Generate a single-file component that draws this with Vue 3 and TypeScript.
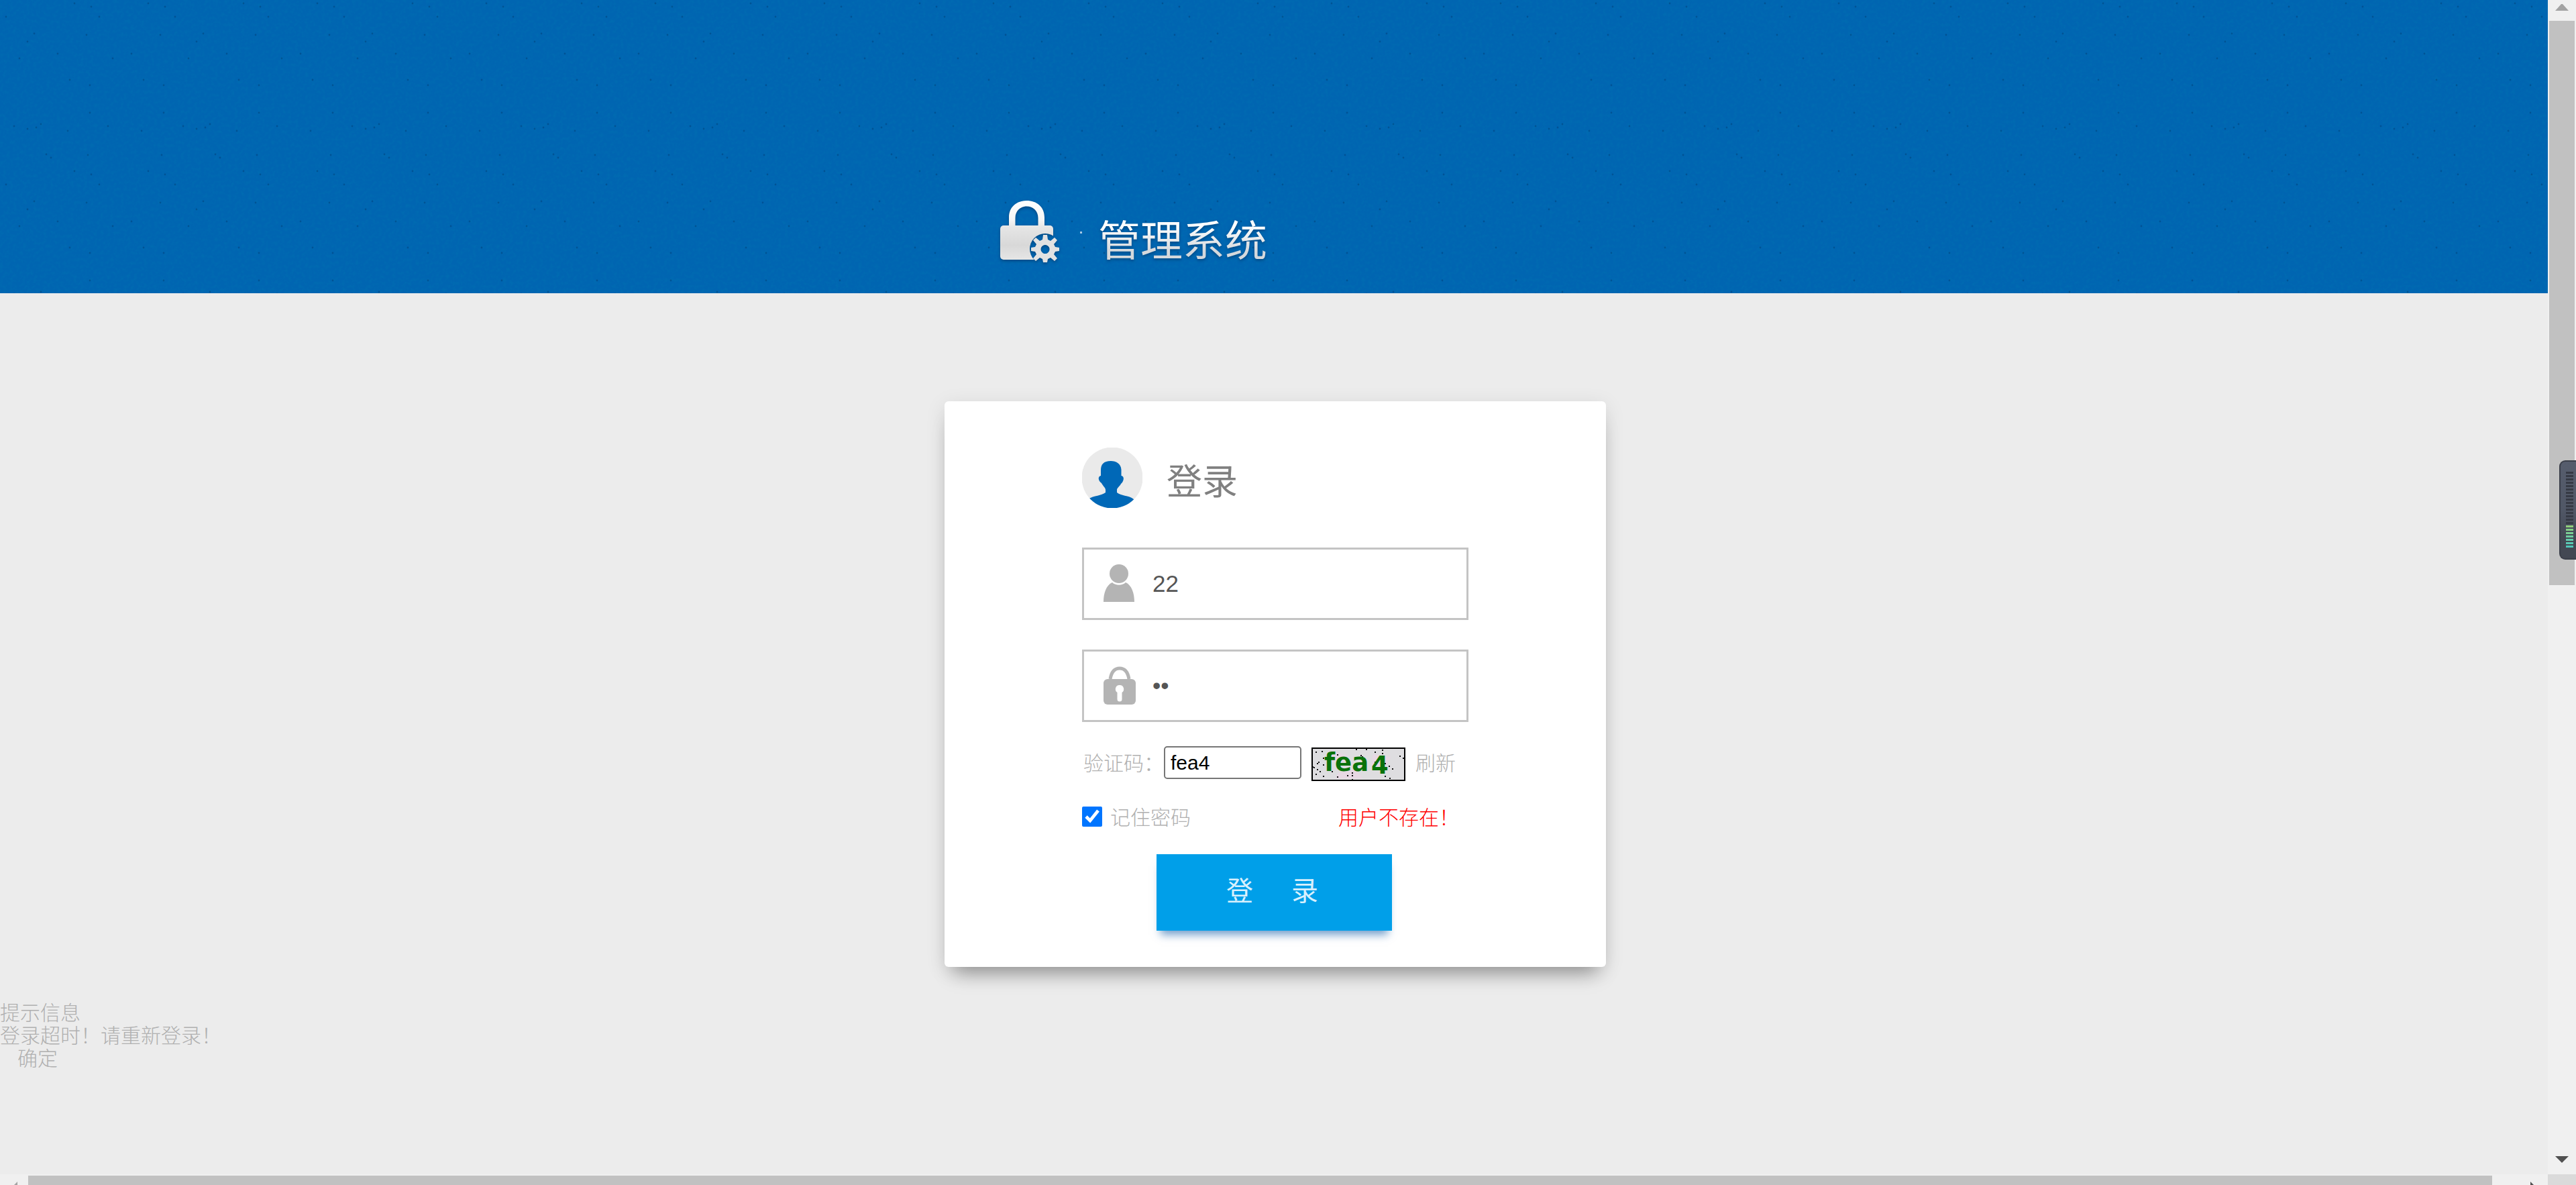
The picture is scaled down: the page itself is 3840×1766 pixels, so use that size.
<script setup lang="ts">
import { ref } from 'vue'

const username = ref('22')
const password = ref('22')
const captcha = ref('fea4')
const remember = ref(true)
const error = ref('用户不存在！')

// Speckles of one 252 x 250 header texture tile
const speckles: [number, number][] = [
  [111, 5], [221, 5], [136, 10], [246, 10], [9, 25], [148, 25], [51, 50], [41, 62],
  [129, 52], [239, 52], [86, 80], [196, 80], [29, 87], [168, 87], [104, 119], [214, 119],
  [134, 127], [244, 127], [134, 168], [244, 168], [41, 192], [21, 188], [161, 188],
  [54, 190], [61, 185], [101, 195], [211, 195], [69, 230], [76, 235], [131, 231], [241, 231],
]

// Noise dots of the captcha picture
const noise: [number, number][] = [
  [7, 7], [16, 6], [67, 3], [82, 3], [95, 7], [106, 4], [106, 9], [132, 13], [137, 16],
  [39, 11], [74, 12], [76, 14], [65, 16], [2, 29], [11, 22], [9, 24], [18, 26], [4, 30],
  [9, 33], [13, 36], [7, 40], [18, 43], [39, 44], [54, 42], [61, 38], [61, 42], [61, 48],
  [110, 43], [117, 46], [121, 32], [116, 28], [110, 24], [18, 16], [31, 36], [95, 22],
]

const meter = Array.from({ length: 23 }, (_, i) => i)
const greens = ['#8fd07c', '#84d088', '#79cf94', '#6ecea0', '#63ccab', '#59cab3', '#50c7b8']
const meterColor = (i: number) => (i < 16 ? '#363a45' : greens[i - 16])
</script>

<template>
  <div class="window">
    <div class="page">
      <header class="header">
        <svg class="texture" aria-hidden="true">
          <defs>
            <pattern id="grain" width="252" height="250" patternUnits="userSpaceOnUse">
              <circle v-for="([x, y], i) in speckles" :key="i" :cx="x" :cy="y" r="1.4" fill="#003f78" opacity="0.5" />
            </pattern>
            <filter id="noise" x="0" y="0" width="100%" height="100%">
              <feTurbulence type="fractalNoise" baseFrequency="0.2" numOctaves="2" />
              <feColorMatrix values="0 0 0 0 0  0 0 0 0 0.25  0 0 0 0 0.45  0.7 0 0 0 -0.27" />
            </filter>
          </defs>
          <rect width="100%" height="100%" filter="url(#noise)" opacity="0.5" />
          <rect width="100%" height="100%" fill="url(#grain)" />
        </svg>
        <div class="wrap brand">
          <svg class="brand-icon" viewBox="0 0 90 96" aria-hidden="true">
            <defs>
              <linearGradient id="metal" x1="0" y1="0" x2="0" y2="96" gradientUnits="userSpaceOnUse">
                <stop offset="0" stop-color="#ffffff" />
                <stop offset="0.3" stop-color="#f6f6f6" />
                <stop offset="0.42" stop-color="#e6e6e6" />
                <stop offset="0.7" stop-color="#d8d8d8" />
                <stop offset="1" stop-color="#eaeaea" />
              </linearGradient>
              <mask id="bite">
                <rect width="90" height="96" fill="#fff" />
                <circle cx="68" cy="73" r="23" fill="#000" />
              </mask>
            </defs>
            <g mask="url(#bite)" fill="url(#metal)">
              <path d="M14 42V26C14 10 26 1 40.500 1S67 10 67 26V42H57.500V27C57.500 16 50 9.500 40.500 9.500S23.500 16 23.500 27V42Z" />
              <rect x="1" y="38" width="79" height="51" rx="5" />
            </g>
            <path
              transform="translate(1 1)"
              fill="#e2e2e2"
              fill-rule="evenodd"
              d="M64 51h6l1 7 4 2 6-5 4 4-5 6 2 4 6 1v5l-6 1-2 4 5 6-4 4-6-5-4 2-1 5h-6l-1-5-4-2-6 5-4-4 5-6-2-4-6-1v-5l6-1 2-4-5-6 4-4 6 5 4-2ZM67 66a6.500 6.500 0 1 0 0.100 0Z"
            />
          </svg>
          <span class="brand-dot"></span>
          <h1 class="brand-name">管理系统</h1>
        </div>
      </header>

      <main class="wrap">
        <form class="card" @submit.prevent>
          <div class="title">
            <svg class="avatar" viewBox="0 0 90 90" aria-hidden="true">
              <defs><clipPath id="disc"><circle cx="45" cy="45" r="45.500" /></clipPath></defs>
              <g clip-path="url(#disc)">
                <rect width="90" height="90" fill="#eaeaea" />
                <path
                  fill="#0068b7"
                  d="M43 20C51 20 58 24 58.500 33V42C64 43 62 51 58 54C56 58 52 60 52 63V67C57 72 70 71 77 77L90 95H0L9 77C18 71 29 72 35 67V63C35 60 31 57 29 53C24 50 23 43 28 42V34C28 25 32 20 43 20Z"
                />
              </g>
            </svg>
            <h2>登录</h2>
          </div>

          <label class="field">
            <svg class="field-icon" viewBox="0 0 48 58" aria-hidden="true" fill="#b4b4b4">
              <circle cx="23" cy="14" r="14" />
              <path d="M0 56C0 43 4 31 13 27C18 32 28 32 33 27C42 31 46 43 46 56Z" />
            </svg>
            <input v-model="username" type="text" aria-label="用户名" />
          </label>

          <label class="field">
            <svg class="field-icon" viewBox="0 0 48 58" aria-hidden="true">
              <path d="M10 19C12 7 17 3 24 3S36 7 38 19" fill="none" stroke="#b4b4b4" stroke-width="5" />
              <rect y="19" width="48" height="38" rx="6" fill="#b4b4b4" />
              <path d="M24 28a6 6 0 0 1 3.500 11V49a3.500 3.500 0 0 1-7 0V39A6 6 0 0 1 24 28Z" fill="#fff" />
            </svg>
            <input v-model="password" type="password" aria-label="密码" />
          </label>

          <div class="captcha">
            <label for="code">验证码：</label>
            <input id="code" v-model="captcha" type="text" />
            <svg class="captcha-image" viewBox="0 0 140 50">
              <rect x="1" y="1" width="138" height="48" fill="#dedde0" stroke="#000" stroke-width="2" />
              <path d="M30 4l24 8-12 12-18-6ZM92 10l26 4-10 22-20-10ZM40 38l26-6 10 14H36Z" fill="#f0d4e8" opacity="0.5" />
              <rect v-for="([x, y], i) in noise" :key="i" :x="x - 1" :y="y - 1" width="2" height="2" fill="#111" />
              <text x="19" y="35">fea</text>
              <text x="89" y="39">4</text>
            </svg>
            <a href="#">刷新</a>
          </div>

          <div class="options">
            <label class="remember"><input v-model="remember" type="checkbox" /><span>记住密码</span></label>
            <span class="error">{{ error }}</span>
          </div>

          <button class="submit" type="submit"><span>登</span><span>录</span></button>
        </form>
      </main>

      <section class="notice">
        <div>提示信息</div>
        <div>登录超时！请重新登录！</div>
        <a href="#">确定</a>
      </section>
    </div>

    <div class="vbar">
      <svg class="arrow-up" viewBox="0 0 42 31" aria-hidden="true"><path d="M11 16L20 6h2L31 16Z" fill="#a3a3a3" /></svg>
      <div class="vtrack">
        <div class="vthumb"></div>
      </div>
      <svg class="arrow-down" viewBox="0 0 42 31" aria-hidden="true"><path d="M11 4H31L21 14Z" fill="#505050" /></svg>
    </div>
    <div class="hbar">
      <svg class="arrow-side" viewBox="0 0 42 16" aria-hidden="true"><path d="M26 11V16H21Z" fill="#a3a3a3" /></svg>
      <div class="hthumb"></div>
      <svg class="arrow-end" viewBox="0 0 83 16" aria-hidden="true"><path d="M57 11V16H62Z" fill="#505050" /></svg>
    </div>
    <div class="corner"></div>

    <div class="meter">
      <i v-for="i in meter" :key="i" :style="{ background: meterColor(i) }"></i>
    </div>
  </div>
</template>

<style>
body {
  margin: 0;
  background: #ececec;
}
</style>

<style scoped>
.window {
  position: relative;
  display: grid;
  grid-template-columns: 1fr 42px;
  grid-template-rows: 1fr 16px;
  min-height: 100vh;
  background: #ececec;
  color: #b0b0b0;
  font: 300 30px/34px "Liberation Sans", "Noto Sans CJK SC", sans-serif;
}
a {
  color: inherit;
  text-decoration: none;
}
h1,
h2 {
  margin: 0;
  font-weight: 400;
}
.wrap {
  box-sizing: border-box;
  width: 990px;
  margin: 0 auto;
  padding-left: 4px;
}

.header {
  position: relative;
  display: flex;
  align-items: flex-end;
  height: 437px;
  background: #0065b1;
}
.texture {
  position: absolute;
  inset: 0;
  width: 100%;
  height: 100%;
}
.brand {
  position: relative;
  display: flex;
  align-items: center;
  padding: 0 0 42px 86px;
}
.brand-icon {
  width: 90px;
  height: 96px;
  filter: drop-shadow(0 2px 2px rgba(0, 40, 80, 0.5));
}
.brand-dot {
  width: 3px;
  height: 3px;
  margin: 0 24px 0 30px;
  background: #a8c8e4;
}
.brand-name {
  font-size: 63px;
  line-height: 72px;
  padding-top: 26px;
  background: linear-gradient(#fff 40%, #d4d8dc 80%);
  background-clip: text;
  color: transparent;
  filter: drop-shadow(0 2px 2px rgba(0, 40, 80, 0.5));
}

.card {
  box-sizing: border-box;
  margin-top: 161px;
  padding: 69px 205px 54px;
  border-radius: 6px;
  background: #fff;
  box-shadow: 0 22px 28px -14px rgba(0, 0, 0, 0.36), 0 6px 30px rgba(0, 0, 0, 0.1);
}
.title {
  display: flex;
  align-items: center;
  gap: 36px;
  margin-bottom: 59px;
}
.avatar {
  width: 90px;
  height: 90px;
}
.title h2 {
  padding-top: 14px;
  font-size: 53px;
  line-height: 60px;
  color: #808080;
}

.field {
  box-sizing: border-box;
  display: flex;
  align-items: center;
  gap: 25px;
  height: 108px;
  margin-bottom: 44px;
  padding-left: 29px;
  border: 3px solid #c4c4c4;
}
.field-icon {
  width: 48px;
  height: 58px;
}
.field input {
  flex: 1;
  min-width: 0;
  padding: 0;
  border: 0;
  outline: 0;
  background: none;
  color: #555;
  font: 35px/42px "Liberation Sans", sans-serif;
}

.captcha {
  display: flex;
  align-items: center;
  height: 52px;
  margin: -8px 0 35px;
  padding-left: 2px;
}
.captcha label {
  width: 120px;
}
.captcha input {
  box-sizing: border-box;
  width: 205px;
  height: 49px;
  margin-bottom: 3px;
  padding: 0 8px;
  border: 2px solid #767676;
  border-radius: 5px;
  background: #fff;
  color: #000;
  font: 30px/34px "Liberation Sans", sans-serif;
}
.captcha-image {
  width: 140px;
  height: 50px;
  margin: 2px 15px 0;
}
.captcha-image text {
  fill: #0a720a;
  font: bold 37px "DejaVu Sans", sans-serif;
}

.options {
  display: flex;
  align-items: center;
  justify-content: space-between;
  height: 36px;
  margin-bottom: 38px;
  padding-right: 14px;
}
.remember {
  display: flex;
  align-items: center;
  gap: 12px;
}
.remember input {
  width: 30px;
  height: 30px;
  margin: 0;
  accent-color: #0075ff;
}
.remember span,
.error {
  padding-top: 4px;
}
.error {
  color: #f00;
}

.submit {
  display: flex;
  justify-content: center;
  gap: 57px;
  width: 351px;
  height: 114px;
  margin: 0 auto 0 111px;
  padding: 0 6px 10px 0;
  border: 0;
  background: #009fe9;
  box-shadow: 0 12px 12px -6px rgba(0, 80, 160, 0.55);
  color: #d8f0fd;
  font: 400 40px/104px "Noto Sans CJK SC", sans-serif;
}

.notice {
  margin-top: 52px;
}
.notice a {
  padding-left: 26px;
}

.vbar {
  display: flex;
  flex-direction: column;
  background: #f0f0f0;
}
.arrow-up,
.arrow-down {
  width: 42px;
  height: 31px;
}
.vtrack {
  flex: 1;
}
.vthumb {
  height: 841px;
  margin: 0 2px;
  background: #c1c1c1;
}
.hbar {
  display: flex;
  background: #f0f0f0;
}
.arrow-side {
  width: 42px;
  height: 16px;
}
.arrow-end {
  width: 83px;
  height: 16px;
}
.hthumb {
  flex: 1;
  margin-top: 2px;
  background: #c1c1c1;
}
.corner {
  background: #dadada;
}

.meter {
  position: absolute;
  top: 686px;
  right: 0;
  box-sizing: border-box;
  display: grid;
  gap: 2px;
  align-content: start;
  width: 25px;
  height: 148px;
  padding: 15px 4px 0 8px;
  border: 2px solid #3b3f4a;
  border-right: 0;
  border-radius: 9px 0 0 9px;
  background: linear-gradient(#565d6d, #505766 50%, #434853 80%);
}
.meter i {
  height: 3px;
}
</style>
